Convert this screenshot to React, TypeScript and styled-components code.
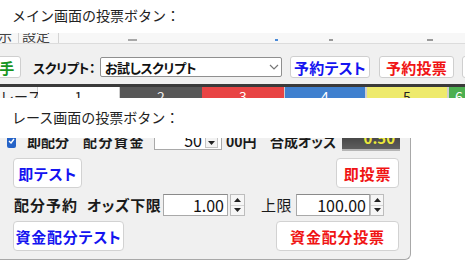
import React from "react";
import styled, { createGlobalStyle } from "styled-components";

const GlobalStyle = createGlobalStyle`
  html, body { margin: 0; padding: 0; background: #fff; }
  body {
    width: 465px; height: 261px; overflow: hidden;
    font-family: "Noto Sans CJK JP", "Noto Sans", sans-serif;
  }
`;

const Page = styled.div`
  width: 465px;
  height: 261px;
  display: flex;
  flex-direction: column;
  overflow: hidden;
  background: #fff;
`;

const Caption = styled.div<{ $h: number; $top: number }>`
  height: ${(p) => p.$h}px;
  box-sizing: border-box;
  padding: ${(p) => p.$top}px 0 0 12px;
  font-size: 14px;
  line-height: 14px;
  color: #222;
  flex: none;
`;

/* ---------- main window crop ---------- */
const MainShot = styled.div`
  height: 65px;
  flex: none;
  display: flex;
  flex-direction: column;
  overflow: hidden;
`;

const TabStrip = styled.div`
  height: 10px;
  flex: none;
  display: flex;
  align-items: flex-end;
  overflow: hidden;
  background: #f7f7f7;
  border-bottom: 1px solid #dcdcdc;
`;

const Tab = styled.div<{ $w: number; $ml?: number }>`
  width: ${(p) => p.$w}px;
  margin-left: ${(p) => p.$ml ?? 0}px;
  height: 16px;
  line-height: 16px;
  font-size: 14px;
  color: #444;
  box-sizing: border-box;
  padding-left: 3px;
  border-right: 1px solid #d4d4d4;
  flex: none;
  white-space: nowrap;
`;

const TabMark = styled.div<{ $w: number; $ml: number; $color: string }>`
  width: ${(p) => p.$w}px;
  margin-left: ${(p) => p.$ml}px;
  height: 2px;
  margin-bottom: 2px;
  flex: none;
  background: ${(p) => p.$color};
`;

const Toolbar = styled.div`
  height: 40px;
  flex: none;
  box-sizing: border-box;
  padding-top: 6px;
  display: flex;
  align-items: center;
  background: #f0f0f0;
  font-feature-settings: "palt";
`;

const ToolButton = styled.div<{ $w: number; $ml: number; $color: string }>`
  width: ${(p) => p.$w}px;
  margin-left: ${(p) => p.$ml}px;
  height: 22px;
  box-sizing: border-box;
  flex: none;
  display: flex;
  align-items: center;
  justify-content: center;
  background: #fff;
  border: 1px solid #cfcfcf;
  border-radius: 3px;
  color: ${(p) => p.$color};
  font-weight: 700;
  font-size: 15px;
  line-height: 1;
  letter-spacing: 0.3px;
  white-space: nowrap;
  overflow: hidden;
`;

const ToolLabel = styled.div`
  width: 67px;
  margin-left: 12px;
  flex: none;
  font-weight: 700;
  font-size: 13px;
  line-height: 1;
  letter-spacing: -0.4px;
  color: #111;
  white-space: nowrap;
`;

const Select = styled.div`
  width: 182px;
  height: 20px;
  flex: none;
  box-sizing: border-box;
  border: 1px solid #8f8f8f;
  border-radius: 2px;
  background: #fff;
  display: flex;
  align-items: center;
  justify-content: space-between;
  padding: 0 2px 0 4px;
  font-weight: 700;
  font-size: 13px;
  line-height: 1;
  letter-spacing: -0.5px;
  color: #111;
  white-space: nowrap;
`;

const CellRow = styled.div`
  height: 11px;
  flex: none;
  display: flex;
  overflow: hidden;
  border-top: 3px solid #3a3a3a;
  background: #cfcfcf;
`;

const Cell = styled.div<{ $w: number; $bg: string; $fg: string; $ml?: number }>`
  width: ${(p) => p.$w}px;
  margin-left: ${(p) => p.$ml ?? 0}px;
  flex: none;
  background: ${(p) => p.$bg};
  color: ${(p) => p.$fg};
  font-size: 14px;
  line-height: 14px;
  padding-top: 2px;
  text-align: center;
  box-sizing: border-box;
  white-space: nowrap;
`;

/* ---------- race panel crop ---------- */
const RacePanel = styled.div`
  width: 411px;
  height: 122px;
  flex: none;
  box-sizing: border-box;
  display: flex;
  flex-direction: column;
  background: #f0f0f0;
  border-right: 1px solid #a8a8a8;
  border-bottom: 1px solid #a8a8a8;
  border-bottom-right-radius: 6px;
  overflow: hidden;
  font-feature-settings: "palt";
`;

const ClippedRow = styled.div`
  height: 13px;
  flex: none;
  display: flex;
  align-items: flex-end;
  overflow: hidden;
  padding-left: 7px;
`;

const Check = styled.div`
  width: 9px;
  height: 14px;
  margin-bottom: 3px;
  flex: none;
  border-radius: 2px;
  background: #2563c7;
  display: flex;
  justify-content: center;
  align-items: center;
`;

const TopLabel = styled.div<{ $ml: number; $w: number; $ls?: number }>`
  margin-left: ${(p) => p.$ml}px;
  width: ${(p) => p.$w}px;
  margin-bottom: 2px;
  flex: none;
  font-size: 14px;
  line-height: 16px;
  font-weight: 700;
  color: #1a1a1a;
  white-space: nowrap;
  letter-spacing: ${(p) => p.$ls ?? 0}px;
`;

const Label = styled.div<{ $ml: number; $w: number; $bold?: boolean; $ls?: number }>`
  margin-left: ${(p) => p.$ml}px;
  width: ${(p) => p.$w}px;
  flex: none;
  font-size: 15px;
  line-height: 16px;
  font-weight: ${(p) => (p.$bold === false ? 400 : 700)};
  color: #1a1a1a;
  white-space: nowrap;
  letter-spacing: ${(p) => p.$ls ?? 0.6}px;
`;

const NumBox = styled.div<{ $w: number; $ml: number; $h: number; $mb?: number }>`
  width: ${(p) => p.$w}px;
  height: ${(p) => p.$h}px;
  margin-left: ${(p) => p.$ml}px;
  margin-bottom: ${(p) => p.$mb ?? 0}px;
  flex: none;
  box-sizing: border-box;
  background: #fff;
  border: 1px solid #a9a9a9;
  border-top-color: #8a8a8a;
  display: flex;
  align-items: center;
  justify-content: flex-end;
  padding-right: 3px;
  font-size: 16px;
  line-height: 1;
  color: #111;
`;

const InlineSpin = styled.div`
  width: 11px;
  height: 9px;
  margin-left: 3px;
  align-self: flex-end;
  margin-bottom: 1px;
  border: 1px solid #c4c4c4;
  background: #f3f3f3;
  display: flex;
  align-items: center;
  justify-content: center;
`;

const OddsBox = styled.div`
  width: 58px;
  height: 20px;
  margin-left: 10px;
  flex: none;
  box-sizing: border-box;
  background: linear-gradient(#3a3a3a, #5e5e5e);
  border-bottom: 2px solid #b5b5b5;
  display: flex;
  align-items: flex-end;
  justify-content: flex-end;
  padding: 0 5px 3px 0;
  color: #ece83a;
  font-weight: 700;
  font-size: 15px;
  line-height: 16px;
`;

const ButtonRow = styled.div<{ $h: number; $mt: number }>`
  height: ${(p) => p.$h}px;
  margin-top: ${(p) => p.$mt}px;
  flex: none;
  display: flex;
  justify-content: space-between;
  align-items: center;
  padding: 0 11px 0 13px;
`;

const PanelButton = styled.div<{ $w: number; $color: string }>`
  width: ${(p) => p.$w}px;
  height: 30px;
  flex: none;
  box-sizing: border-box;
  background: #fff;
  border: 1px solid #d2d2d2;
  border-radius: 4px;
  display: flex;
  align-items: center;
  justify-content: center;
  color: ${(p) => p.$color};
  font-weight: 700;
  font-size: 15px;
  line-height: 1;
  letter-spacing: 0.8px;
  white-space: nowrap;
`;

const FieldRow = styled.div`
  height: 22px;
  margin-top: 6px;
  flex: none;
  display: flex;
  align-items: center;
  padding-left: 14px;
`;

const Spinner = styled.div<{ $ml: number; $w: number }>`
  width: ${(p) => p.$w}px;
  height: 22px;
  margin-left: ${(p) => p.$ml}px;
  flex: none;
  box-sizing: border-box;
  border: 1px solid #bdbdbd;
  background: #f6f6f6;
  display: flex;
  flex-direction: column;
`;

const SpinHalf = styled.div<{ $top?: boolean }>`
  flex: 1;
  display: flex;
  align-items: center;
  justify-content: center;
  ${(p) => (p.$top ? "border-bottom: 1px solid #d6d6d6;" : "")}
`;

const Tri = ({ up }: { up?: boolean }) => (
  <svg width="7" height="4" viewBox="0 0 7 4">
    <polygon points={up ? "0,4 7,4 3.5,0" : "0,0 7,0 3.5,4"} fill="#222" />
  </svg>
);

const Chevron = () => (
  <svg width="10" height="6" viewBox="0 0 10 6">
    <polyline points="1,1 5,5 9,1" fill="none" stroke="#777" strokeWidth="1.2" />
  </svg>
);

const CheckMark = () => (
  <svg width="7" height="6" viewBox="0 0 7 6">
    <polyline points="1,3 3,5 6,1" fill="none" stroke="#fff" strokeWidth="1.4" />
  </svg>
);

export default function App() {
  return (
    <>
      <GlobalStyle />
      <Page>
        <Caption $h={33} $top={8}>メイン画面の投票ボタン：</Caption>
        <MainShot>
          <TabStrip>
            <Tab $w={24} $ml={-5}>示</Tab>
            <Tab $w={40}>設定</Tab>
            <TabMark $ml={69} $w={9} $color="#a8a8a8" />
            <TabMark $ml={138} $w={3} $color="#4a8ad8" />
            <TabMark $ml={51} $w={4} $color="#9a9a9a" />
            <TabMark $ml={94} $w={6} $color="#9a9a9a" />
          </TabStrip>
          <Toolbar>
            <ToolButton $w={28} $ml={-7} $color="#17951f">手</ToolButton>
            <ToolLabel>スクリプト：</ToolLabel>
            <Select>
              <span>お試しスクリプト</span>
              <Chevron />
            </Select>
            <ToolButton $w={80} $ml={8} $color="#1414f0">予約テスト</ToolButton>
            <ToolButton $w={75} $ml={9} $color="#f01414">予約投票</ToolButton>
            <ToolButton $w={20} $ml={8} $color="#333"></ToolButton>
          </Toolbar>
          <CellRow>
            <Cell $w={37} $bg="#f7f7f7" $fg="#222">レース</Cell>
            <Cell $w={81} $ml={1} $bg="#ffffff" $fg="#222">1</Cell>
            <Cell $w={82} $ml={1} $bg="#575757" $fg="#eee">2</Cell>
            <Cell $w={82} $bg="#e84444" $fg="#fff">3</Cell>
            <Cell $w={80} $ml={1} $bg="#3f80cf" $fg="#fff">4</Cell>
            <Cell $w={80} $ml={2} $bg="#eeea6c" $fg="#222">5</Cell>
            <Cell $w={20} $ml={2} $bg="#4caf50" $fg="#fff">6</Cell>
          </CellRow>
        </MainShot>
        <Caption $h={40} $top={12}>レース画面の投票ボタン：</Caption>
        <RacePanel>
          <ClippedRow>
            <Check>
              <CheckMark />
            </Check>
            <TopLabel $ml={11} $w={43}>即配分</TopLabel>
            <TopLabel $ml={13} $w={62} $ls={1.5}>配分資金</TopLabel>
            <NumBox $w={68} $ml={9} $h={20} $mb={1}>
              <span>50</span>
              <InlineSpin>
                <Tri />
              </InlineSpin>
            </NumBox>
            <TopLabel $ml={4} $w={31}>00円</TopLabel>
            <TopLabel $ml={13} $w={62}>合成オッズ</TopLabel>
            <OddsBox>0.50</OddsBox>
          </ClippedRow>
          <ButtonRow $h={30} $mt={7}>
            <PanelButton $w={69} $color="#1414f0">即テスト</PanelButton>
            <PanelButton $w={63} $color="#f01414">即投票</PanelButton>
          </ButtonRow>
          <FieldRow>
            <Label $ml={0} $w={64} $ls={1}>配分予約</Label>
            <Label $ml={9} $w={71}>オッズ下限</Label>
            <NumBox $w={65} $ml={5} $h={22}>1.00</NumBox>
            <Spinner $ml={2} $w={15}>
              <SpinHalf $top><Tri up /></SpinHalf>
              <SpinHalf><Tri /></SpinHalf>
            </Spinner>
            <Label $ml={16} $w={30} $bold={false}>上限</Label>
            <NumBox $w={74} $ml={5} $h={22}>100.00</NumBox>
            <Spinner $ml={0} $w={14}>
              <SpinHalf $top><Tri up /></SpinHalf>
              <SpinHalf><Tri /></SpinHalf>
            </Spinner>
          </FieldRow>
          <ButtonRow $h={30} $mt={5}>
            <PanelButton $w={111} $color="#1414f0">資金配分テスト</PanelButton>
            <PanelButton $w={123} $color="#f01414">資金配分投票</PanelButton>
          </ButtonRow>
        </RacePanel>
      </Page>
    </>
  );
}
